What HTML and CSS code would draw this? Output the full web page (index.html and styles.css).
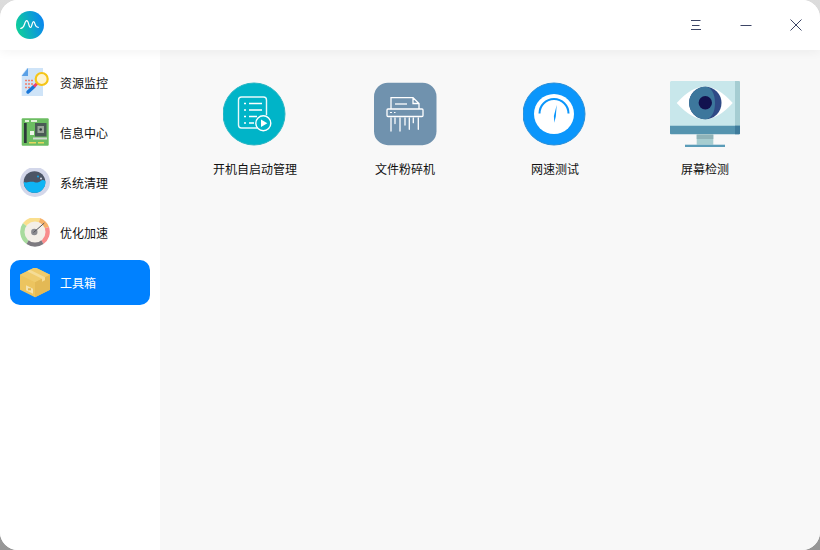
FILE: index.html
```html
<!DOCTYPE html>
<html lang="zh">
<head>
<meta charset="utf-8">
<title>工具箱</title>
<link rel="stylesheet" href="styles.css">
</head>
<body>
<div class="window">
  <header class="titlebar">
    <svg class="logo" width="28" height="28" viewBox="0 0 28 28">
      <defs><linearGradient id="lg" x1="0" y1="0.6" x2="1" y2="0.3"><stop offset="0" stop-color="#0fcf9a"/><stop offset="1" stop-color="#0a84f2"/></linearGradient></defs>
      <circle cx="14" cy="14" r="14" fill="url(#lg)"/>
      <path d="M4.700 17.300c2 0 3-1.500 3.800-4s1.200-3.600 2.200-3.600 1.500 1.500 2 3.500.9 3.300 1.800 3.300 1-1.200 1.500-3 .9-2.800 1.600-2.800 1.100 1.300 1.600 3 1.200 2.600 3.100 2.600" fill="none" stroke="#fff" stroke-width="1.200" stroke-linecap="round"/>
    </svg>
    <div class="controls">
      <svg width="14" height="14" viewBox="0 0 14 14"><path d="M2 2.500h9.500M3 7.500h7.500M2 11.500h10" stroke="#3c4566" stroke-width="1" fill="none"/></svg>
      <svg width="14" height="14" viewBox="0 0 14 14"><path d="M1.500 7.500h11" stroke="#3c4566" stroke-width="1" fill="none"/></svg>
      <svg width="14" height="14" viewBox="0 0 14 14"><path d="M1.500 1.500l11 11M12.500 1.500l-11 11" stroke="#3c4566" stroke-width="1" fill="none"/></svg>
    </div>
  </header>
  <div class="content">
    <nav class="sidebar">
      <a class="nav-item">
        <svg class="nav-icon" width="30" height="30" viewBox="0 0 30 30">
          <path d="M7 0h16v28H1.700V7z" fill="#cfe4f8"/>
          <path d="M8 0v8H1.700z" fill="#5aa0e6"/>
          <path d="M5 12.500h8M5 16h8M5 19.500h6" stroke="#ef7f6d" stroke-width="1.500" stroke-dasharray="2 1"/>
          <path d="M8 24l6-5.500" stroke="#1976d8" stroke-width="3.500" stroke-linecap="round"/>
          <path d="M14 18.500l3.500-3.500" stroke="#f0426c" stroke-width="3"/>
          <circle cx="21.700" cy="11" r="6" fill="#fdf3cf" stroke="#f5c518" stroke-width="2.200"/>
        </svg>
        <span>资源监控</span>
      </a>
      <a class="nav-item">
        <svg class="nav-icon" width="30" height="30" viewBox="0 0 30 30">
          <rect x="1.700" y="0.300" width="27" height="27.400" rx="1" fill="#6cbd62"/>
          <rect x="4" y="5" width="2.700" height="20" fill="#2d3a3a"/>
          <rect x="5" y="2" width="4" height="2" fill="#dff0d8"/>
          <rect x="11" y="2" width="6" height="2" fill="#dff0d8"/>
          <rect x="10" y="13" width="4" height="4" fill="#eef5e8"/>
          <rect x="15" y="5" width="11.500" height="13.500" fill="#4a5a55"/>
          <rect x="17.500" y="8" width="6.500" height="7" fill="#9aa59a"/>
          <circle cx="20.700" cy="11.500" r="1.300" fill="#2d3a3a"/>
          <rect x="13" y="19.500" width="14" height="2" fill="#cfd8cf"/>
          <rect x="9" y="24" width="7" height="1.500" fill="#e6d860"/>
          <rect x="18" y="24" width="6" height="1.500" fill="#e6d860"/>
        </svg>
        <span>信息中心</span>
      </a>
      <a class="nav-item">
        <svg class="nav-icon" width="30" height="30" viewBox="0 1 30 30">
          <circle cx="15" cy="15" r="15" fill="#d3d7ea"/>
          <circle cx="14.500" cy="15" r="10.800" fill="#4c5566"/>
          <path d="M3.800 15c3 1 5-.3 8-.3s4 1.200 6.500.6 3-2.800 5-2.300 2.200 1 2.200 2a10.800 10.800 0 0 1-21.700 0z" fill="#0fb4f4"/>
          <circle cx="18" cy="9.500" r="1" fill="#14a8ec"/><circle cx="21" cy="11.500" r="1" fill="#d8dce8"/>
        </svg>
        <span>系统清理</span>
      </a>
      <a class="nav-item">
        <svg class="nav-icon" width="30" height="30" viewBox="0 1 30 30">
          <path d="M6.500 27A15 15 0 0 1 3 6l6 5a8 8 0 0 0 1 10z" fill="#a8db9e"/>
          <path d="M3 6a15 15 0 0 1 17-5l-2 7a8 8 0 0 0-9 3z" fill="#fadf8e"/>
          <path d="M20 1a15 15 0 0 1 9 9l-7 2a8 8 0 0 0-4-4z" fill="#f6b26b"/>
          <path d="M29 10a15 15 0 0 1-5.500 17L20 21a8 8 0 0 0 2-9z" fill="#f88c8c"/>
          <path d="M6.500 27a15 15 0 0 0 17 0L20 21a8 8 0 0 1-10 0z" fill="#7d7a80"/>
          <circle cx="15" cy="15" r="10.500" fill="#f4efe8"/>
          <circle cx="14.300" cy="15" r="3.200" fill="#8b8b90"/>
          <path d="M13.500 15.500L24.300 6" stroke="#55555c" stroke-width="1"/>
        </svg>
        <span>优化加速</span>
      </a>
      <a class="nav-item active">
        <svg class="nav-icon" width="30" height="30" viewBox="0 0.700 30 30">
          <path d="M15 0l15 7.500v15L15 30 0 22.500v-15z" fill="#ecc45f"/>
          <path d="M0 7.500L15 0l15 7.500L15 15z" fill="#efcb6c"/>
          <path d="M15 15l15-7.500v15L15 30z" fill="#e3b955"/>
          <path d="M7 4l15 7.500v3l3-1.500v-3L10 2.500z" fill="#f5dc95"/>
          <path d="M6 18l7 3.500v5L6 23z" fill="#f4e3b0"/>
          <rect x="8" y="21" width="3" height="2" fill="#e0b44f"/>
        </svg>
        <span>工具箱</span>
      </a>
    </nav>
    <main class="tools">
      <div class="tool">
        <svg class="tool-icon" width="64" height="64" viewBox="0 0 64 64">
          <circle cx="31" cy="32" r="31" fill="#00b4c8" stroke="#2bb6c4" stroke-width="1"/>
          <path d="M34 46H18.500a3 3 0 0 1-3-3V18a3 3 0 0 1 3-3h22a3 3 0 0 1 3 3v15" fill="none" stroke="#e8f9fb" stroke-width="1.400"/>
          <path d="M21 21.500h2M21 28h2M21 34.500h2M21 41h2" stroke="#fff" stroke-width="1.400"/>
          <path d="M26 21.500h13M26 28h13M26 34.500h8M26 41h5" stroke="#fff" stroke-width="1.300"/>
          <circle cx="40.300" cy="41.300" r="7.500" fill="#00b4c8" stroke="#fff" stroke-width="1.400"/>
          <path d="M38 37.500v7.600l6.300-3.800z" fill="#fff"/>
        </svg>
        <span>开机自启动管理</span>
      </div>
      <div class="tool">
        <svg class="tool-icon" width="64" height="64" viewBox="0 0 64 64">
          <rect x="1" y="0.700" width="62.500" height="62.500" rx="14" fill="#7092ae"/>
          <path d="M18 27V15.700h22L46 21.500V27M40 15.700v5.800h6" fill="none" stroke="#fff" stroke-width="1.300"/>
          <path d="M22 22h12" stroke="#fff" stroke-width="1.300"/>
          <rect x="14" y="27" width="36" height="7.500" rx="1" fill="none" stroke="#fff" stroke-width="1.300"/>
          <path d="M17 30.500h2M21 30.500h1.500" stroke="#fff" stroke-width="1"/>
          <path d="M18 36v13M22 36v5.500M27 36v13M32 36v7M36.300 36v11.300M40.300 36v4.700M45.300 36v11.300" stroke="#fff" stroke-width="1.300" stroke-linecap="round"/>
        </svg>
        <span>文件粉碎机</span>
      </div>
      <div class="tool">
        <svg class="tool-icon" width="64" height="64" viewBox="0 0 64 64">
          <circle cx="31" cy="32" r="31" fill="#0b96fb" stroke="#2a8fd8" stroke-width="1"/>
          <circle cx="31" cy="32" r="20" fill="#fff"/>
          <path d="M16.500 31.500a14.500 14.500 0 0 1 29 0" fill="none" stroke="#0b96fb" stroke-width="2" stroke-linecap="butt"/>
          <path d="M33.700 23l-.9 11.500-1.500 6.200-.4-6.700z" fill="#0b96fb"/>
        </svg>
        <span>网速测试</span>
      </div>
      <div class="tool">
        <svg class="tool-icon monitor" width="70" height="66" viewBox="0 0 70 66">
          <path d="M1 0h68v53H0V1z" fill="#c8e7eb"/>
          <path d="M65 0h4a1 1 0 0 1 1 1v44h-5z" fill="#a5cdd2"/>
          <path d="M0 44.700h70V52.300a1 1 0 0 1-1 1H1a1 1 0 0 1-1-1z" fill="#5594af"/>
          <path d="M65 44.700h5v7.600a1 1 0 0 1-1 1h-4z" fill="#3f7c9c"/>
          <rect x="26.700" y="53.500" width="16.600" height="10.200" fill="#a6cdd0"/>
          <rect x="26.700" y="53.500" width="16.600" height="4.500" fill="#8fb3b8"/>
          <rect x="15" y="63.700" width="40" height="2.300" fill="#5a9cb8"/>
          <path d="M6.700 22Q21 5.700 34.700 5.700T62.700 22Q48 38.300 34.700 38.300T6.700 22z" fill="#fff"/>
          <circle cx="35.300" cy="22" r="16.200" fill="#2f4a86"/>
          <path d="M35.300 5.800a16.200 16.200 0 0 0 0 32.400c6 0 9.700-7 9.700-16.200S41.300 5.800 35.300 5.800z" fill="#3d779c"/>
          <circle cx="35.300" cy="21.700" r="6.700" fill="#12124f"/>
        </svg>
        <span>屏幕检测</span>
      </div>
    </main>
  </div>
</div>
</body>
</html>
```

FILE: styles.css
```css
* { box-sizing: border-box; }
html, body { margin: 0; padding: 0; height: 100%; }
body {
  width: 820px;
  height: 550px;
  overflow: hidden;
  background: linear-gradient(#dcdcdc, #969696);
  font-family: "Noto Sans CJK SC", "Noto Sans", sans-serif;
  font-size: 12px;
  color: #111;
}
.window {
  width: 820px;
  height: 550px;
  border-radius: 18px;
  overflow: hidden;
  background: #fff;
  display: flex;
  flex-direction: column;
}
.titlebar {
  height: 50px;
  flex: none;
  display: flex;
  align-items: center;
  justify-content: space-between;
  padding: 0 17px 0 16px;
  background: #fff;
  position: relative;
  z-index: 1;
  box-shadow: 0 2px 10px rgba(0, 0, 0, 0.05);
}
.controls { display: flex; gap: 36px; align-items: center; }
.content { flex: 1; display: flex; min-height: 0; }
.sidebar {
  width: 160px;
  flex: none;
  background: #fff;
  padding: 10px 10px 0;
  display: flex;
  flex-direction: column;
  gap: 5px;
}
.nav-item {
  height: 45px;
  display: flex;
  align-items: center;
  gap: 10px;
  padding-left: 10px;
  border-radius: 10px;
}
.nav-item.active { background: #0081ff; color: #fff; }
.nav-icon { flex: none; }
.tools {
  flex: 1;
  background: #f8f8f8;
  padding: 32px 0 0 20px;
  display: flex;
  align-items: flex-start;
}
.tool {
  width: 150px;
  display: flex;
  flex-direction: column;
  align-items: center;
  gap: 14px;
  line-height: 18px;
}
.tool-icon { display: block; }
.monitor { margin: -1px 0; }
```
